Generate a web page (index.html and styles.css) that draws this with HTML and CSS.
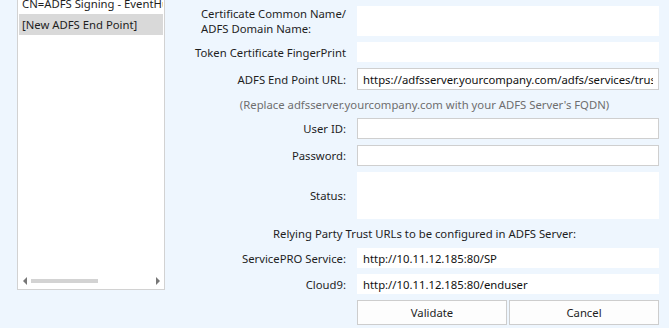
FILE: index.html
```html
<!DOCTYPE html>
<html lang="en">
<head>
    <meta charset="UTF-8">
    <meta name="viewport" content="width=device-width, initial-scale=1.0">
    <title>ADFS End Points</title>
    <link rel="stylesheet" href="styles.css">
</head>
<body>
    <div class="window">
        <div class="list-panel">
            <ul class="endpoint-list">
                <li>CN=ADFS Signing - EventHub</li>
                <li class="selected">[New ADFS End Point]</li>
            </ul>
            <div class="hscroll">
                <span class="arrow arrow-left"></span>
                <span class="track"><span class="thumb"></span></span>
                <span class="arrow arrow-right"></span>
            </div>
        </div>

        <div class="form">
            <label class="label label-multi">Certificate Common Name/<br>ADFS Domain Name:</label>
            <input class="field plain" type="text" value="">

            <label class="label">Token Certificate FingerPrint</label>
            <input class="field plain" type="text" value="">

            <label class="label">ADFS End Point URL:</label>
            <input class="field boxed" type="text" value="https://adfsserver.yourcompany.com/adfs/services/trust/2005/usernamemixed">

            <div class="note hint">(Replace adfsserver.yourcompany.com with your ADFS Server's FQDN)</div>

            <label class="label">User ID:</label>
            <input class="field boxed" type="text" value="">

            <label class="label">Password:</label>
            <input class="field boxed" type="password" value="">

            <label class="label">Status:</label>
            <div class="field plain status"></div>

            <div class="note">Relying Party Trust URLs to be configured in ADFS Server:</div>

            <label class="label">ServicePRO Service:</label>
            <input class="field plain" type="text" value="http://10.11.12.185:80/SP" readonly>

            <label class="label">Cloud9:</label>
            <input class="field plain" type="text" value="http://10.11.12.185:80/enduser" readonly>

            <div class="actions">
                <button id="validate">Validate</button>
                <button id="cancel">Cancel</button>
            </div>
        </div>
    </div>
</body>
</html>
```

FILE: styles.css
```css
body {
    margin: 0;
    background-color: #eef6fe;
    font-family: "Noto Sans", "Open Sans", sans-serif;
    font-size: 11.3px;
    color: #1e1e1e;
    overflow: hidden;
}
.window {
    display: flex;
    align-items: flex-start;
    padding-left: 17px;
    height: 328px;
}
.list-panel {
    display: flex;
    flex-direction: column;
    width: 146px;
    height: 298px;
    margin-top: -10px;
    background-color: white;
    border: 1px solid #d2d2d2;
}
.endpoint-list {
    flex: 1;
    list-style: none;
    margin: 0;
    padding: 2px 0 0 0;
}
.endpoint-list li {
    margin: 0 1px;
    padding-left: 3px;
    line-height: 21px;
    height: 21px;
    white-space: nowrap;
    overflow: hidden;
}
.endpoint-list .selected {
    background-color: #d9d9d9;
}
.hscroll {
    display: flex;
    align-items: center;
    height: 17px;
    padding: 0 4px 0 5px;
}
.arrow {
    width: 0;
    height: 0;
    border-top: 4px solid transparent;
    border-bottom: 4px solid transparent;
}
.arrow-left {
    border-right: 4px solid #777;
}
.arrow-right {
    border-left: 4px solid #777;
}
.track {
    flex: 1;
    padding: 0 3px 0 4px;
}
.thumb {
    display: block;
    width: 67px;
    height: 4px;
    background-color: #d3d3d3;
}
.form {
    display: grid;
    grid-template-columns: 156px 302px;
    grid-template-rows: 30px 20px 22px 16px 21px 21px 47px 17px 20px 20px 25px;
    column-gap: 11px;
    row-gap: 6px;
    padding-top: 6px;
    margin-left: 25px;
}
.label {
    justify-self: end;
    align-self: center;
    white-space: nowrap;
}
.label-multi {
    line-height: 15px;
}
.field {
    box-sizing: border-box;
    width: 100%;
    height: 100%;
    margin: 0;
    padding: 0 5px;
    font-family: inherit;
    font-size: 11.3px;
    color: #111;
    background-color: white;
    outline: none;
}
.plain {
    border: none;
    padding-left: 6px;
}
.boxed {
    border: 1px solid #cfcfcf;
}
.note {
    grid-column: 1 / span 2;
    text-align: center;
    align-self: center;
    white-space: nowrap;
}
.hint {
    color: #6e6e6e;
}
.actions {
    grid-column: 2;
    display: grid;
    grid-template-columns: 1fr 1fr;
    gap: 2px;
}
button {
    font-family: inherit;
    font-size: 11.3px;
    color: #1e1e1e;
    background-color: #fdfdfd;
    border: 1px solid #cdcdcd;
    padding: 0;
    cursor: pointer;
}
```
